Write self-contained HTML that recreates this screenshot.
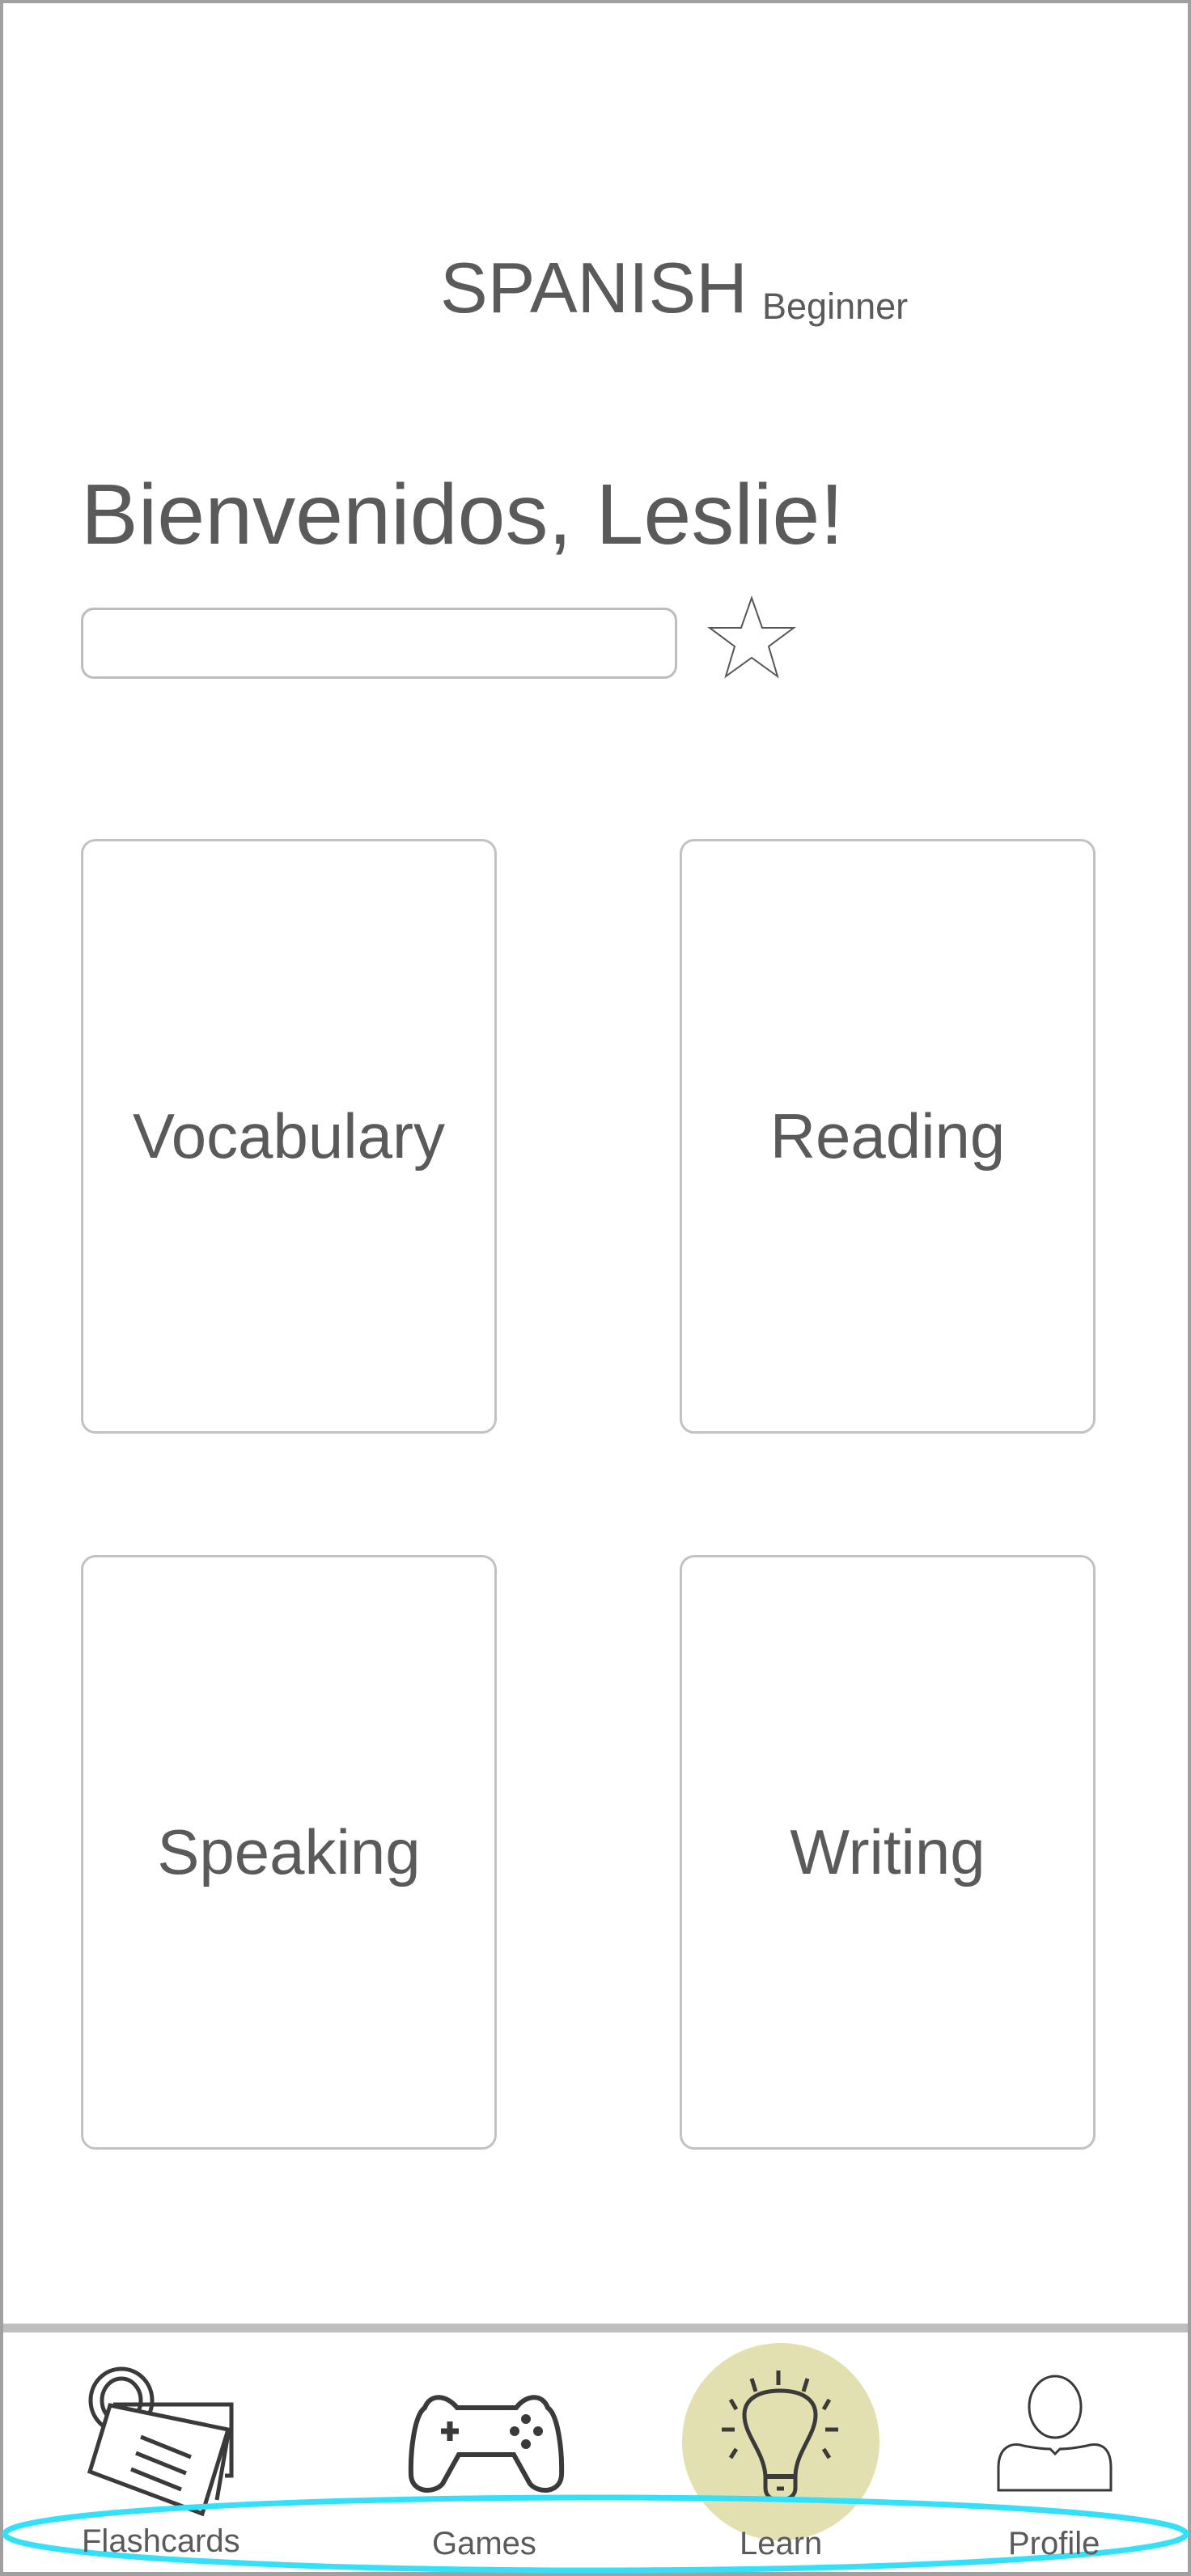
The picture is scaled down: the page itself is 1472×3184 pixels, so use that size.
<!DOCTYPE html>
<html><head><meta charset="utf-8"><style>
html,body{margin:0;padding:0;}
body{width:1472px;height:3184px;position:relative;background:#fff;overflow:hidden;font-family:"Liberation Sans",Arial,sans-serif;color:#5a5a5a;}
.frame{position:absolute;left:0;top:0;width:1464px;height:3175px;border:4px solid #a0a0a0;border-bottom-width:5px;}
.t{position:absolute;white-space:nowrap;line-height:1;}
.card{position:absolute;width:514px;height:735px;border:3px solid #c2c2c2;border-radius:18px;box-sizing:border-box;display:flex;align-items:center;justify-content:center;font-size:78px;color:#5a5a5a;}
.bar{position:absolute;left:100px;top:751px;width:737px;height:88px;border:3px solid #bdbdbd;border-radius:16px;box-sizing:border-box;}
.navline{position:absolute;left:4px;top:2872px;width:1464px;height:11px;background:#bebebe;}
.lab{position:absolute;font-size:40px;line-height:1;color:#5a5a5a;white-space:nowrap;}
</style></head><body>
<div class="frame"></div>
<div class="t" style="left:544px;top:312px;font-size:88px;">SPANISH</div>
<div class="t" style="left:942px;top:356px;font-size:45px;">Beginner</div>
<div class="t" style="left:100px;top:583px;font-size:106px;">Bienvenidos, Leslie!</div>
<div class="bar"></div>
<svg style="position:absolute;left:0;top:0" width="1472" height="3184">
<polygon points="929,739 942,776 981,776 950,799 961,836 929,813 897,836 908,799 877,776 916,776" fill="none" stroke="#555" stroke-width="2"/>
</svg>
<div class="card" style="left:100px;top:1037px;">Vocabulary</div>
<div class="card" style="left:840px;top:1037px;">Reading</div>
<div class="card" style="left:100px;top:1922px;">Speaking</div>
<div class="card" style="left:840px;top:1922px;">Writing</div>
<div class="navline"></div>
<svg style="position:absolute;left:0;top:0" width="1472" height="3184">
<circle cx="965" cy="3018" r="122" fill="#e2e0b0"/>
<!-- flashcards -->
<g fill="none" stroke="#3a3a3a" stroke-width="5">
<ellipse cx="150" cy="2967" rx="38" ry="39"/>
<ellipse cx="150" cy="2967" rx="24" ry="27"/>
<polyline points="140,2972 286,2972 286,3060 278,3060"/>
<polyline points="138,2975 282,3008 268,3090"/>
<polygon points="136,2973 282,3003 250,3107 111,3055" fill="#fff"/>
<line x1="174" y1="3012" x2="236" y2="3037"/>
<line x1="168" y1="3032" x2="230" y2="3057"/>
<line x1="162" y1="3052" x2="224" y2="3077"/>
</g>
<!-- gamepad -->
<g fill="none" stroke="#3a3a3a" stroke-width="6">
<path d="M565,2976 L638,2976 C650,2960 670,2958 677,2976 C690,2985 695,3030 694,3060 C692,3082 665,3082 655,3070 L635,3034 L567,3034 L547,3070 C537,3082 510,3082 508,3060 C507,3030 512,2985 525,2976 C532,2958 552,2960 565,2976 Z"/>
<line x1="545" y1="3005" x2="567" y2="3005" stroke-width="7"/>
<line x1="556" y1="2993" x2="556" y2="3017" stroke-width="7"/>
</g>
<g fill="#3a3a3a">
<circle cx="650" cy="2990" r="6"/><circle cx="650" cy="3021" r="6"/>
<circle cx="636" cy="3005" r="6"/><circle cx="665" cy="3005" r="6"/>
</g>
<!-- bulb -->
<g fill="none" stroke="#3a3a3a" stroke-width="5">
<path d="M946,3060 C944,3030 920,3010 920,2985 C920,2965 938,2955 964,2955 C990,2955 1008,2965 1008,2985 C1008,3010 984,3030 983,3060 L983,3075 C983,3085 975,3090 964,3090 C953,3090 946,3085 946,3075 Z"/>
<line x1="946" y1="3061" x2="983" y2="3061" stroke-width="6"/>
<line x1="960" y1="3076" x2="969" y2="3076"/>
<line x1="962" y1="2930" x2="962" y2="2948"/>
<line x1="929" y1="2940" x2="934" y2="2956"/>
<line x1="998" y1="2940" x2="993" y2="2956"/>
<line x1="903" y1="2966" x2="910" y2="2978"/>
<line x1="1025" y1="2966" x2="1018" y2="2978"/>
<line x1="892" y1="3003" x2="908" y2="3003"/>
<line x1="1020" y1="3003" x2="1036" y2="3003"/>
<line x1="903" y1="3038" x2="910" y2="3027"/>
<line x1="1025" y1="3038" x2="1018" y2="3027"/>
</g>
<!-- profile -->
<g fill="none" stroke="#3a3a3a" stroke-width="3">
<ellipse cx="1304" cy="2975" rx="32" ry="38"/>
<path d="M1234,3078 L1234,3050 C1234,3025 1250,3018 1265,3023 C1280,3026 1288,3027 1298,3027 L1304,3033 L1310,3027 C1320,3027 1328,3026 1343,3023 C1360,3018 1373,3025 1373,3050 L1373,3078 Z"/>
</g>
<ellipse cx="736" cy="3132" rx="730" ry="45" fill="none" stroke="#33e0fa" stroke-width="7"/>
</svg>
<div class="lab" style="left:101px;top:3121px;">Flashcards</div>
<div class="lab" style="left:534px;top:3124px;">Games</div>
<div class="lab" style="left:914px;top:3124px;">Learn</div>
<div class="lab" style="left:1246px;top:3124px;">Profile</div>
</body></html>
